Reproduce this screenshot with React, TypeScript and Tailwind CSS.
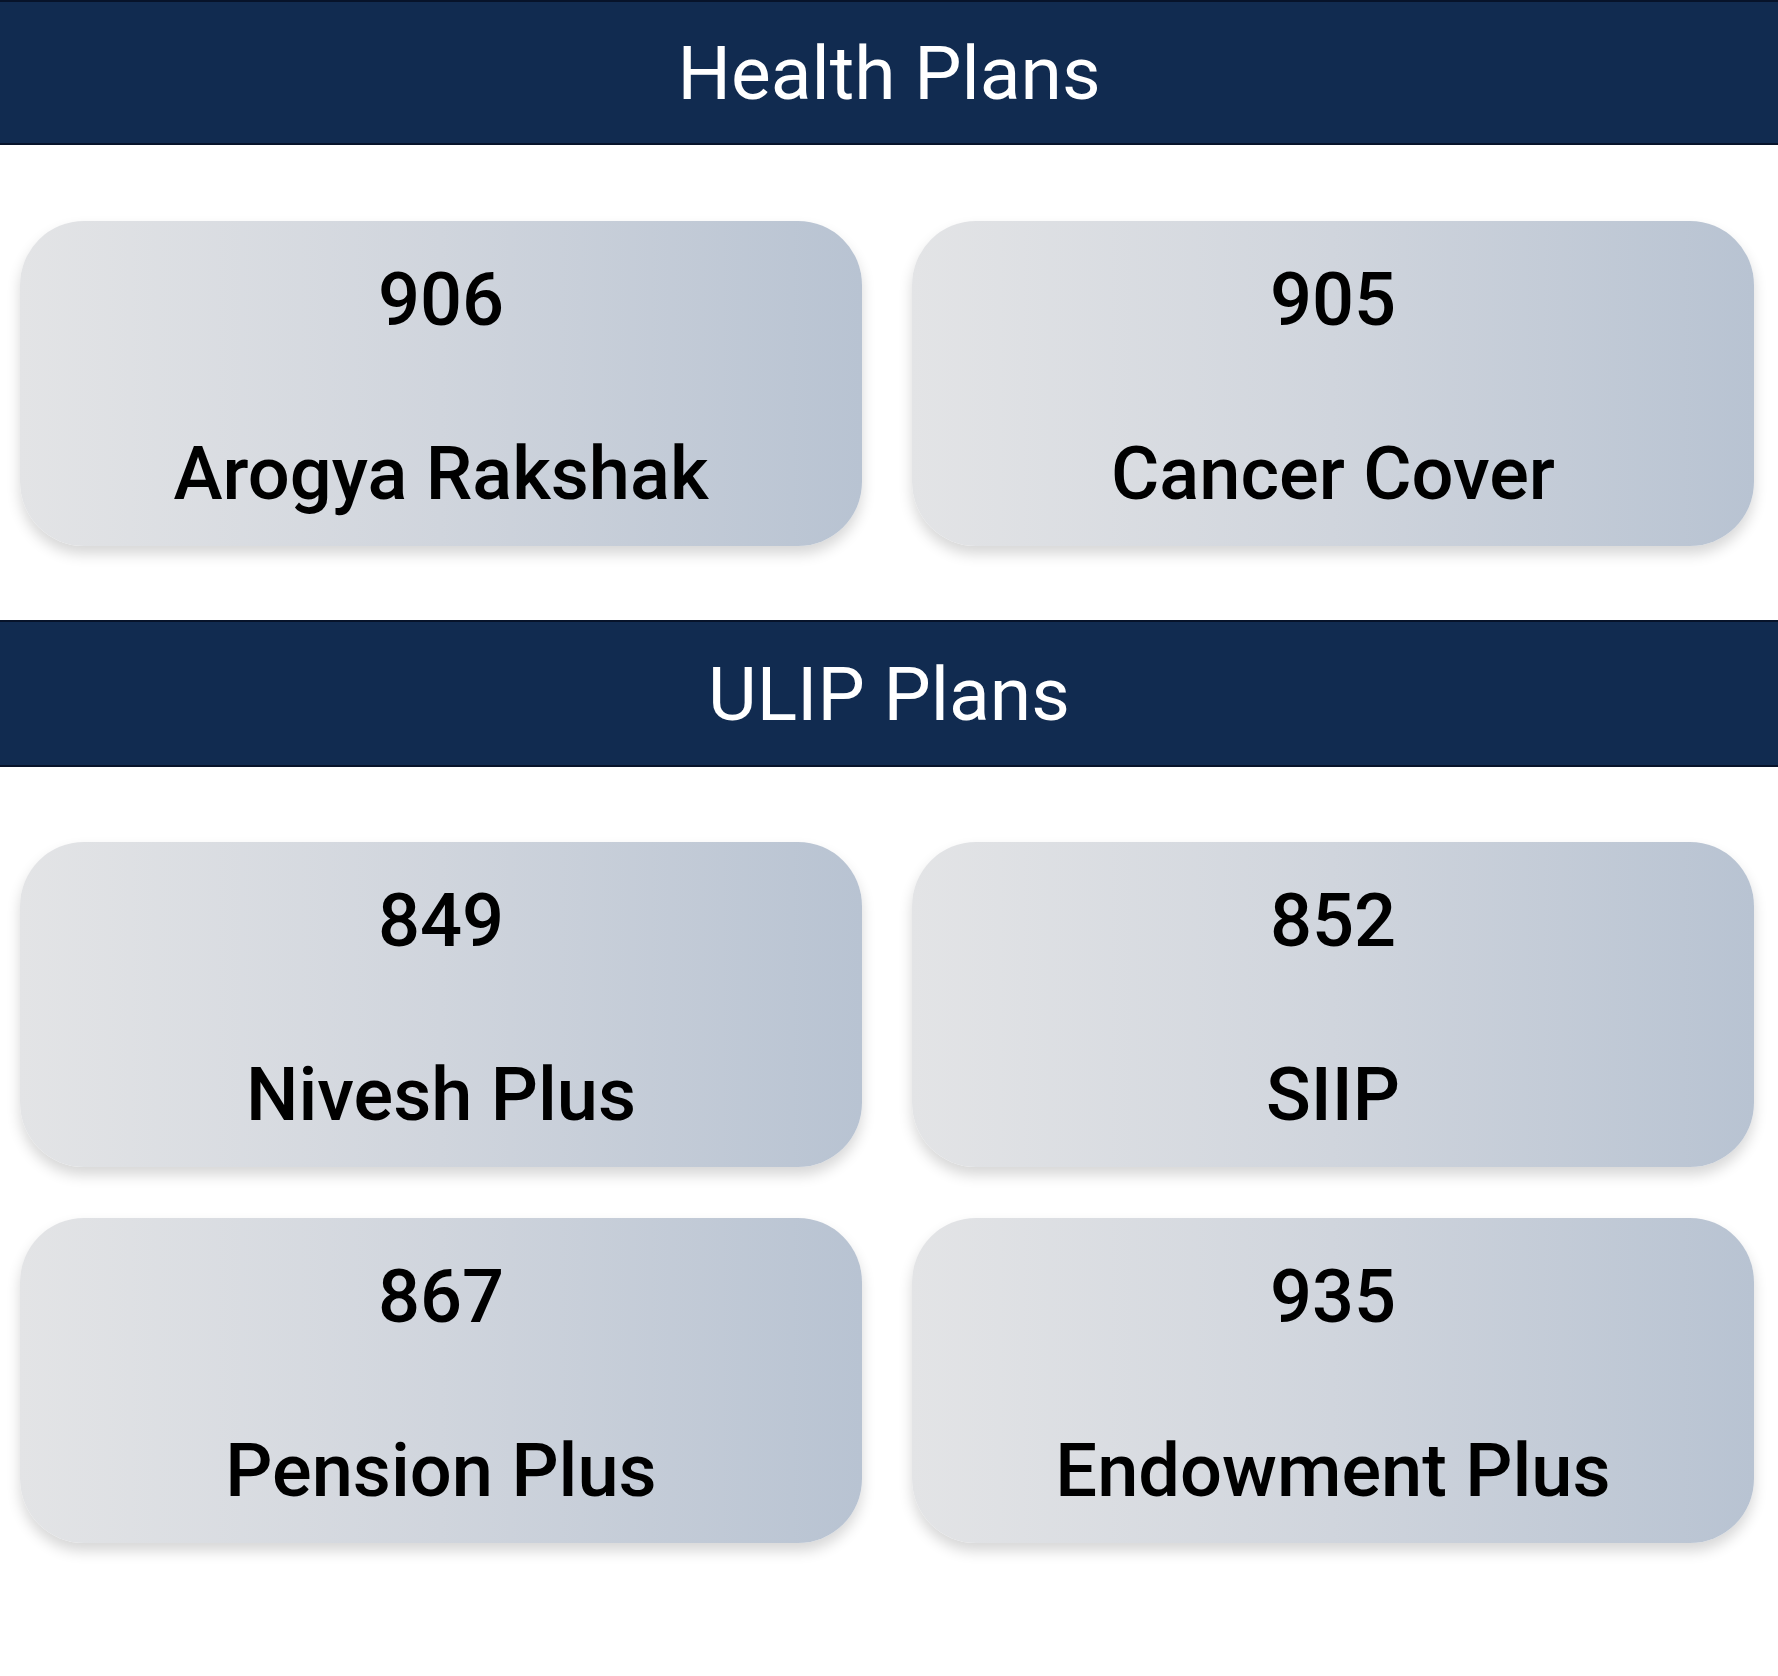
import React from "react";

type Plan = { code: string; name: string };

const health: Plan[] = [
  { code: "906", name: "Arogya Rakshak" },
  { code: "905", name: "Cancer Cover" },
];

const ulip: Plan[] = [
  { code: "849", name: "Nivesh Plus" },
  { code: "852", name: "SIIP" },
  { code: "867", name: "Pension Plus" },
  { code: "935", name: "Endowment Plus" },
];

function Header({ title, h }: { title: string; h: string }) {
  return (
    <div
      className={`${h} flex items-center justify-center bg-[#112b50] border-y-2 border-[#07132a]`}
    >
      <span className="text-white text-[75px] leading-[88px] font-normal">{title}</span>
    </div>
  );
}

function Card({ p }: { p: Plan }) {
  return (
    <div className="h-[325px] rounded-[64px] bg-gradient-to-r from-[#e3e4e6] via-[#d0d5dd] to-[#b8c3d2] shadow-[0_8px_14px_rgba(0,0,0,0.16)] flex flex-col items-center pt-[35px] gap-[86px] text-black">
      <div className="text-[74px] leading-[88px] font-medium">{p.code}</div>
      <div className="text-[74px] leading-[88px] font-medium">{p.name}</div>
    </div>
  );
}

export default function App() {
  return (
    <div
      className="w-[1778px] min-h-[1676px] bg-white"
      style={{ fontFamily: "Roboto, 'Noto Sans', sans-serif" }}
    >
      <Header title="Health Plans" h="h-[145px]" />
      <div className="grid grid-cols-2 gap-x-[50px] pl-[20px] pr-[24px] pt-[76px] pb-[74px]">
        {health.map((p) => (
          <Card key={p.code} p={p} />
        ))}
      </div>
      <Header title="ULIP Plans" h="h-[147px]" />
      <div className="grid grid-cols-2 gap-x-[50px] gap-y-[51px] pl-[20px] pr-[24px] pt-[75px] pb-[60px]">
        {ulip.map((p) => (
          <Card key={p.code} p={p} />
        ))}
      </div>
    </div>
  );
}
